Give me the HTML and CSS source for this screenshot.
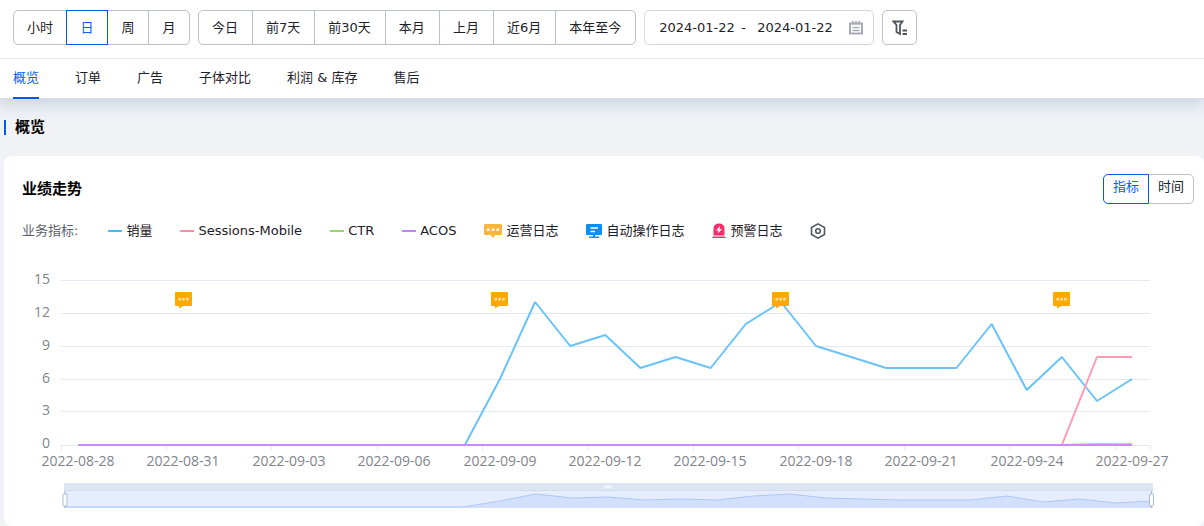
FILE: index.html
```html
<!DOCTYPE html>
<html lang="zh-CN">
<head>
<meta charset="utf-8">
<meta name="viewport" content="width=device-width, initial-scale=1">
<title>概览</title>
<link rel="stylesheet" href="styles.css">
</head>
<body>
<header class="header">
  <div class="filters">
    <div class="segmented">
      <button class="segment" type="button">小时</button>
      <button class="segment active" type="button">日</button>
      <button class="segment" type="button">周</button>
      <button class="segment" type="button">月</button>
    </div>
    <div class="segmented presets">
      <button class="segment" type="button">今日</button>
      <button class="segment" type="button">前7天</button>
      <button class="segment" type="button">前30天</button>
      <button class="segment" type="button">本月</button>
      <button class="segment" type="button">上月</button>
      <button class="segment" type="button">近6月</button>
      <button class="segment" type="button">本年至今</button>
    </div>
    <div class="date-range">
      <input class="date-input" type="text" value="2024-01-22" aria-label="开始日期">
      <span class="date-separator">-</span>
      <input class="date-input" type="text" value="2024-01-22" aria-label="结束日期">
      <svg class="date-icon" width="14" height="14" viewBox="0 0 14 14" fill="none" stroke="#a6abb5">
        <path d="M1 2.500H13V12.500H1Z" stroke-width="2"/>
        <path d="M4 0V4M7 0V4M10 0V4" stroke-width="1.600"/>
        <path d="M3.500 6.500H10.500M3.500 9.500H10.500" stroke-width="1.400"/>
      </svg>
    </div>
    <button class="filter-button" type="button" aria-label="筛选">
      <svg width="16" height="16" viewBox="0 0 16 16" fill="none" stroke="#50545e" stroke-width="1.800">
        <path d="M1.500 1.500H10.500L8 5V14L4.500 12V5Z"/>
        <path d="M10.500 10.500H15M10.500 14H15"/>
      </svg>
    </button>
  </div>
  <nav class="tabs">
    <a class="tab active" href="#overview">概览</a>
    <a class="tab" href="#orders">订单</a>
    <a class="tab" href="#ads">广告</a>
    <a class="tab" href="#compare">子体对比</a>
    <a class="tab" href="#profit">利润 &amp; 库存</a>
    <a class="tab" href="#service">售后</a>
  </nav>
</header>
<main class="content" id="overview">
  <h1 class="section-title">概览</h1>
  <section class="card">
    <div class="card-header">
      <h2 class="card-title">业绩走势</h2>
      <div class="segmented small">
        <button class="segment active" type="button">指标</button>
        <button class="segment" type="button">时间</button>
      </div>
    </div>
    <div class="legend">
      <span class="legend-label">业务指标:</span>
      <button class="legend-item" type="button"><span class="swatch sales"></span>销量</button>
      <button class="legend-item" type="button"><span class="swatch sessions"></span>Sessions-Mobile</button>
      <button class="legend-item" type="button"><span class="swatch ctr"></span>CTR</button>
      <button class="legend-item" type="button"><span class="swatch acos"></span>ACOS</button>
      <button class="legend-item" type="button">
        <svg width="18" height="16" viewBox="0 0 18 16">
          <path d="M1.500 1H16.500Q18 1 18 2.500V10.500Q18 12 16.500 12H11.500L9 15L6.500 12H1.500Q0 12 0 10.500V2.500Q0 1 1.500 1Z" fill="#ffb43c"/>
          <path d="M3 5.500H5.500V8H3ZM7.800 5.500H10.300V8H7.800ZM12.500 5.500H15V8H12.500Z" fill="#fff"/>
        </svg>运营日志
      </button>
      <button class="legend-item" type="button">
        <svg width="16" height="16" viewBox="0 0 16 16">
          <path d="M1 1H15Q16 1 16 2V11Q16 12 15 12H9V13.500H13V15H3V13.500H7V12H1Q0 12 0 11V2Q0 1 1 1Z" fill="#0b8ff5"/>
          <path d="M4.500 5H12M4.500 8.500H9" stroke="#fff" stroke-width="1.400"/>
        </svg>自动操作日志
      </button>
      <button class="legend-item" type="button">
        <svg width="14" height="16" viewBox="0 0 14 16">
          <path d="M1.500 12.500V6Q1.500 .5 7 .5T12.500 6V12.500ZM.5 13.500H13.500V15H.5Z" fill="#fa2c6b"/>
          <path d="M8 3L4 7.500H6.500L5.800 10.500L10 6.300H7.500Z" fill="#fff"/>
        </svg>预警日志
      </button>
      <button class="legend-item" type="button" aria-label="设置">
        <svg width="16" height="16" viewBox="0 0 16 16" fill="none" stroke="#555963" stroke-width="1.600">
          <path d="M8 .9L14.500 4.500V11.500L8 15.100L1.500 11.500V4.500Z"/>
          <circle cx="8" cy="8" r="2.300"/>
        </svg>
      </button>
    </div>
    <svg class="chart" viewBox="0 0 1200 260" role="img" aria-label="业绩走势">
      <defs>
        <g id="note">
          <path d="M1 0H16Q17 0 17 1V13Q17 14 16 14H8L4 16.500V14H1Q0 14 0 13V1Q0 0 1 0Z" fill="#ffa800"/>
          <path d="M3.500 6H6V8.500H3.500ZM7.300 6H9.800V8.500H7.300ZM11.200 6H13.700V8.500H11.200Z" fill="#ffe6b0"/>
        </g>
      </defs>
      <path class="grid" d="M57 14.500H1146M57 47.500H1146M57 80.500H1146M57 113.500H1146M57 145.500H1146M57 179.500H1146"/>
      <path class="grid" d="M57.500 179V184M162.500 179V184M267.500 179V184M373.500 179V184M478.500 179V184M584.500 179V184M689.500 179V184M794.500 179V184M900.500 179V184M1005.500 179V184M1111.500 179V184M1146.500 179V184"/>
      <g class="axis-label" text-anchor="end">
        <text x="46" y="18">15</text>
        <text x="46" y="51">12</text>
        <text x="46" y="84">9</text>
        <text x="46" y="117">6</text>
        <text x="46" y="149">3</text>
        <text x="46" y="182">0</text>
      </g>
      <g class="axis-label" text-anchor="middle">
        <text x="74" y="200">2022-08-28</text>
        <text x="179" y="200">2022-08-31</text>
        <text x="285" y="200">2022-09-03</text>
        <text x="390" y="200">2022-09-06</text>
        <text x="496" y="200">2022-09-09</text>
        <text x="601" y="200">2022-09-12</text>
        <text x="706" y="200">2022-09-15</text>
        <text x="812" y="200">2022-09-18</text>
        <text x="917" y="200">2022-09-21</text>
        <text x="1023" y="200">2022-09-24</text>
        <text x="1128" y="200">2022-09-27</text>
      </g>
      <g class="series" transform="translate(74.500 179) scale(35.120 -11)">
        <polyline class="line-sales" points="0,0 11,0 12,6 13,13 14,9 15,10 16,7 17,8 18,7 19,11 20,13 21,9 22,8 23,7 24,7 25,7 26,11 27,5 28,8 29,4 30,6"/>
        <polyline class="line-sessions" points="0,0 28,0 29,8 30,8"/>
        <polyline class="line-ctr" points="0,0 28,0 29,.1 30,.06"/>
        <polyline class="line-acos" points="0,0 30,0"/>
      </g>
      <use href="#note" x="171" y="26"/>
      <use href="#note" x="487" y="26"/>
      <use href="#note" x="768" y="26"/>
      <use href="#note" x="1049" y="26"/>
      <rect x="60" y="217" width="1089" height="8" fill="#dde4f2"/>
      <rect x="60" y="225" width="1089" height="17" fill="#e6edfe"/>
      <path d="M60 224.500H1149" stroke="#d3dbec"/>
      <path d="M601 221H608" stroke="#f4f7fd" stroke-width="3" stroke-dasharray="2 .5"/>
      <g transform="translate(61 241) scale(36.230 -1)">
        <path class="brush-area" d="M0 -1V0H11L12 6L13 13L14 9L15 10L16 7L17 8L18 7L19 11L20 13L21 9L22 8L23 7H25L26 11L27 5L28 8L29 4L30 6V-1Z"/>
        <polyline class="brush-line" points="0,0 11,0 12,6 13,13 14,9 15,10 16,7 17,8 18,7 19,11 20,13 21,9 22,8 23,7 25,7 26,11 27,5 28,8 29,4 30,6"/>
      </g>
      <g class="brush-handle">
        <path d="M61 225V242M1147.500 225V242"/>
        <rect x="59" y="228" width="4" height="12" rx="1"/>
        <rect x="1145.500" y="228" width="4" height="12" rx="1"/>
      </g>
    </svg>
  </section>
</main>
</body>
</html>
```
FILE: styles.css
```css
* {
  box-sizing: border-box;
}

body {
  margin: 0;
  background: #f0f2f6;
  color: #1d2129;
  font: 13px/20px "DejaVu Sans", "Noto Sans CJK SC", sans-serif;
}

button,
input {
  color: inherit;
  font: inherit;
}

.header {
  position: relative;
  background: #fff;
  border-bottom: 1px solid #d9dee8;
  box-shadow: 0 2px 16px 2px #c3cfdf;
}

.filters {
  display: flex;
  gap: 8px;
  padding: 10px 13px 13px;
  border-bottom: 1px solid #e3e9f7;
}

.segmented {
  display: flex;
}

.segment {
  position: relative;
  min-width: 42px;
  height: 35px;
  padding: 0 13px;
  background: #fff;
  border: 1px solid #bdc0c8;
  white-space: nowrap;
}

.segment + .segment {
  margin-left: -1px;
}

.presets .segment {
  padding: 0 14px 0 13px;
}

.segment:first-child {
  border-radius: 5px 0 0 5px;
}

.segment:last-child {
  border-radius: 0 5px 5px 0;
}

.segment.active {
  z-index: 1;
  border-color: #005af0;
  color: #0a5cff;
}

.small .segment {
  height: 30px;
  padding: 0 9px 4px;
}

.date-range {
  display: flex;
  align-items: center;
  width: 230px;
  height: 35px;
  padding: 0 10px 0 14px;
  border: 1px solid #d5d7dd;
  border-radius: 5px;
}

.date-input {
  flex: 1;
  min-width: 0;
  padding: 0;
  border: 0;
  outline: 0;
  background: none;
}

.date-separator {
  width: 16px;
}

.date-icon {
  flex: none;
  margin-left: 10px;
}

.filter-button {
  display: grid;
  place-items: center;
  width: 35px;
  height: 35px;
  padding: 0;
  background: #fff;
  border: 1px solid #bdc0c8;
  border-radius: 5px;
}

.tabs {
  display: flex;
  gap: 36px;
  padding: 0 13px;
}

.tab {
  height: 40px;
  margin-bottom: -1px;
  color: inherit;
  line-height: 38px;
  text-decoration: none;
}

.tab.active {
  border-bottom: 2px solid #005af0;
  color: #0a5cff;
}

.content {
  padding-left: 4px;
}

.section-title {
  margin: 21px 0;
  padding-left: 9px;
  border-left: 2px solid #005af0;
  color: #000;
  font-size: 15px;
  line-height: 15px;
}

.card {
  background: #fff;
  border-radius: 8px;
}

.card-header {
  display: flex;
  align-items: center;
  justify-content: space-between;
  padding: 18px 10px 0 18px;
}

.card-title {
  margin: 0;
  color: #000;
  font-size: 15px;
}

.legend {
  display: flex;
  align-items: center;
  gap: 28px;
  padding: 17px 18px 25px;
}

.legend-label {
  margin-right: 2px;
  color: #5c606a;
}

.legend-item {
  display: flex;
  align-items: center;
  gap: 4px;
  padding: 0;
  background: none;
  border: 0;
  white-space: nowrap;
}

.swatch {
  width: 14px;
  height: 2px;
}

.sales {
  background: #4db8ff;
}

.sessions {
  background: #ff8da6;
}

.ctr {
  background: #95d968;
}

.acos {
  background: #c97fff;
}

.chart {
  display: block;
  width: 100%;
}

.grid {
  stroke: #e3e9f3;
}

.axis-label {
  fill: #7f838c;
  font: 14px "Open Sans", sans-serif;
}

.series polyline,
.brush-line {
  fill: none;
  stroke-width: 2px;
  stroke-linejoin: bevel;
  vector-effect: non-scaling-stroke;
}

.series .line-sales {
  stroke: #69c3fb;
}

.series .line-sessions {
  stroke: #ff9bb0;
}

.series .line-ctr {
  stroke: #a6dc80;
}

.series .line-acos {
  stroke: #cf88f7;
}

.brush-area {
  fill: #d3e0fd;
}

.brush-line {
  stroke: #adc7fa;
  stroke-width: 1px;
}

.brush-handle {
  fill: #fff;
  stroke: #acb8d1;
}
```
